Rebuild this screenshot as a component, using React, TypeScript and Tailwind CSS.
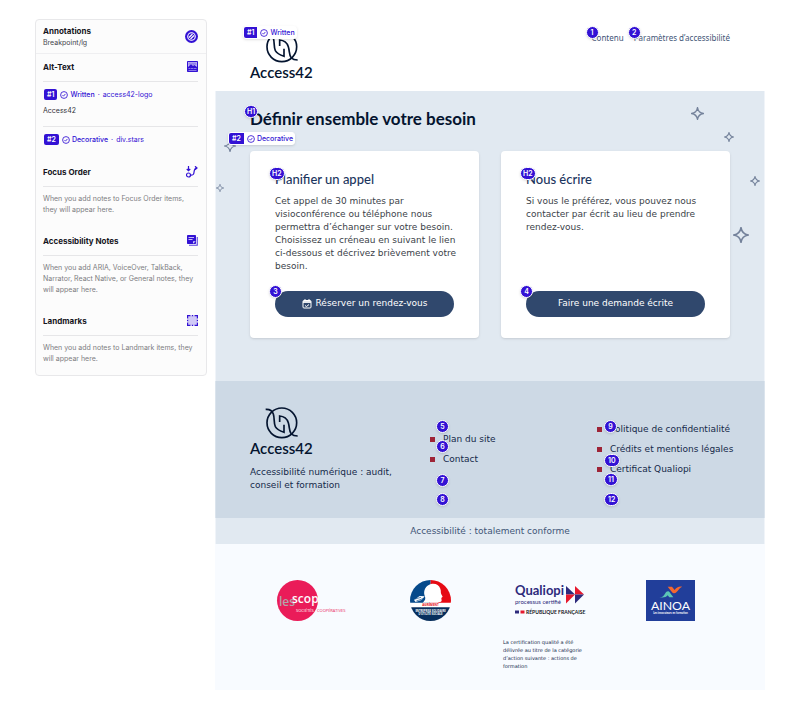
import React from "react";

const VERDANA = "font-[Verdana,'DejaVu_Sans',sans-serif]";
const LATO = "font-[Lato,sans-serif]";
const INTER = "font-[Inter,sans-serif]";

function CheckCircle() {
  return (
    <svg viewBox="0 0 16 16" className="size-2 shrink-0" fill="none" stroke="currentColor" strokeWidth="1.7" aria-hidden="true">
      <circle cx="8" cy="8" r="6.8" />
      <path d="M5 8.3l2 2 3.8-4.4" />
    </svg>
  );
}

function Badge({ children, className }: { children: React.ReactNode; className: string }) {
  return (
    <span
      className={`absolute z-10 flex h-[13px] min-w-[13px] items-center justify-center rounded-full border border-white bg-[#3312d4] text-[7px] leading-none font-semibold text-white shadow-sm ${INTER} ${className}`}
    >
      {children}
    </span>
  );
}

function Tag({ id, label, className }: { id: string; label: string; className: string }) {
  return (
    <span className={`absolute z-10 flex h-[13px] items-center gap-0.5 rounded-[3px] border border-white bg-white pr-px text-[7px] leading-none font-medium whitespace-nowrap text-[#3312d4] shadow-sm ${INTER} ${className}`}>
      <span className="mr-px flex h-full items-center rounded-l-[2px] bg-[#3312d4] px-[3px] font-semibold text-white">{id}</span>
      <CheckCircle />
      {label}
    </span>
  );
}

function Logo() {
  return (
    <div className="w-16 text-[#04142f]">
      <svg viewBox="150 110 102 99" className="ml-[15px] h-[33px] w-[34px]" fill="none" stroke="currentColor" strokeWidth="5" aria-hidden="true">
        <circle cx="200.500" cy="157.500" r="44.500" />
        <path d="M152 117c13-1 20 5 23 14 4 12 1 28 6 38 5 9 14 13 26 17v-23" />
        <path d="M194 155v-18c14 1 22 8 26 20 4 13 2 26 9 34 5 5 11 6 19 6" />
      </svg>
      <p className={`text-[15px] leading-4 font-semibold ${LATO}`}>Access42</p>
    </div>
  );
}

function Star({ className }: { className: string }) {
  return (
    <svg viewBox="0 0 24 24" className={`absolute text-[#74829b] ${className}`} fill="none" stroke="currentColor" strokeWidth="2.500" strokeLinejoin="round" aria-hidden="true">
      <path d="M12 1c1 6.500 4 10 11 11-7 1-10 4.500-11 11-1-6.500-4-10-11-11 7-1 10-4.500 11-11z" />
    </svg>
  );
}

function PanelTitle({ title, icon }: { title: string; icon: React.ReactNode }) {
  return (
    <div className="flex h-7 items-center justify-between border-b border-[#e6e6e8] pb-0.5 text-[#3312d4]">
      <h3 className="text-[8px] font-bold text-[#16161d]">{title}</h3>
      {icon}
    </div>
  );
}

function Note({ id, label, target }: { id: string; label: string; target: string }) {
  return (
    <p className="flex h-[11px] items-center gap-0.5 pl-px text-[7px] leading-none text-[#3312d4]">
      <span className="mr-px flex h-full items-center rounded-[2px] bg-[#3312d4] px-[3px] font-semibold text-white">{id}</span>
      <CheckCircle />
      <span className="font-medium">{label}</span>
      <span className="px-px">·</span>
      <span>{target}</span>
    </p>
  );
}

function Panel() {
  return (
    <aside className={`w-[172px] shrink-0 self-start rounded-[4px] border border-[#e8e8ea] bg-[#fcfcfc] pb-[11px] ${INTER}`}>
      <header className="flex h-[34px] items-center justify-between border-b border-[#efeff1] pr-2 pl-[7px]">
        <div>
          <h2 className="text-[8px] leading-[11px] font-bold text-[#16161d]">Annotations</h2>
          <p className="text-[7px] leading-[11px] text-[#44444c]">Breakpoint/lg</p>
        </div>
        <svg viewBox="0 0 26 26" className="size-[13px]" aria-hidden="true">
          <circle cx="13" cy="13" r="13" fill="#3312d4" />
          <g fill="none" stroke="#fff" strokeWidth="2.200">
            <circle cx="13" cy="13" r="7.500" />
            <path d="M8 15l7-7M11 18l7-7" />
          </g>
        </svg>
      </header>
      <div className="pr-2 pl-[7px]">
        <section className="pb-[14px]">
          <PanelTitle
            title="Alt-Text"
            icon={
              <svg viewBox="0 0 22 22" className="size-[11px]" aria-hidden="true">
                <rect width="22" height="22" rx="1.500" fill="#3312d4" />
                <path d="M2 2h18v10l-5-4-3 2-4-4-6 6z" fill="#c9c1f5" />
                <path d="M3 3h16v6l-3-2-3 2-5-4-5 4z" fill="#3312d4" opacity=".35" />
                <path d="M3 15h4m1 0h4m1 0h6M3 19h16" stroke="#a99cf0" strokeWidth="1.500" />
              </svg>
            }
          />
          <div className="border-b border-[#e6e6e8] pt-[7px] pb-[9px]">
            <Note id="#1" label="Written" target="access42-logo" />
            <p className="mt-[5px] text-[7px] leading-3 text-[#33333b]">Access42</p>
          </div>
          <div className="pt-[7px]">
            <Note id="#2" label="Decorative" target="div.stars" />
          </div>
        </section>
        <section className="pb-[13px]">
          <PanelTitle
            title="Focus Order"
            icon={
              <svg viewBox="0 0 24 24" className="size-3" fill="none" stroke="currentColor" strokeWidth="2.400" aria-hidden="true">
                <path d="M5 0v9M1.500 6L5 9.500 8.500 6" />
                <circle cx="5" cy="18" r="4" />
                <path d="M9 18c12 2 3-13 12-14M18 .5L22 4l-4 3.500" />
              </svg>
            }
          />
          <p className="pt-1.5 text-[7px] leading-[11px] text-[#7c7c82]">When you add notes to Focus Order items, they will appear here.</p>
        </section>
        <section className="pb-[13px]">
          <PanelTitle
            title="Accessibility Notes"
            icon={
              <svg viewBox="0 0 22 22" className="size-[11px]" aria-hidden="true">
                <rect width="18" height="18" rx="1.500" fill="#3312d4" />
                <path d="M20.500 4v16.500H4" fill="none" stroke="#5a40de" strokeWidth="2.200" />
                <path d="M3 5h11M3 9h8" stroke="#d5cff8" strokeWidth="1.800" />
                <path d="M12 17.500v-5h5.500z" fill="#d5cff8" />
              </svg>
            }
          />
          <p className="pt-1.5 text-[7px] leading-[11px] text-[#7c7c82]">When you add ARIA, VoiceOver, TalkBack, Narrator, React Native, or General notes, they will appear here.</p>
        </section>
        <section>
          <PanelTitle
            title="Landmarks"
            icon={
              <svg viewBox="0 0 22 22" className="size-[11px]" aria-hidden="true">
                <rect x="2" y="2" width="18" height="18" fill="#d0c9f6" />
                <path d="M1.200 7V1.200H7M9.500 1.200h3M15 1.200h5.800V7M20.800 9.500v3M20.800 15v5.800H15M12.500 20.800h-3M7 20.800H1.200V15M1.200 12.500v-3" fill="none" stroke="#3312d4" strokeWidth="2.400" />
              </svg>
            }
          />
          <p className="pt-1.5 text-[7px] leading-[11px] text-[#7c7c82]">When you add notes to Landmark items, they will appear here.</p>
        </section>
      </div>
    </aside>
  );
}

function Card({ title, text, action, icon, badge }: { title: string; text: string; action: string; icon?: React.ReactNode; badge: string }) {
  return (
    <article className="flex flex-col rounded-[4px] bg-white px-[25px] pt-5 pb-[21px] shadow-sm">
      <div className="relative">
        <Badge className="-top-1 -left-1.5 px-0.5">H2</Badge>
        <h2 className={`text-[13px] leading-4 font-medium text-[#1c355e] ${LATO}`}>{title}</h2>
      </div>
      <p className="-mr-2 mt-2 mb-[18px] text-[9px] leading-[13px] text-[#3b3f49]">{text}</p>
      <div className="relative mt-auto">
        <Badge className="-top-1.5 -left-1.5">{badge}</Badge>
        <button type="button" className="flex h-[26px] w-full items-center justify-center gap-1 rounded-full bg-[#30486d] text-[9px] text-white">
          {icon}
          {action}
        </button>
      </div>
    </article>
  );
}

function FooterList({ items }: { items: string[] }) {
  return (
    <ul>
      {items.map((item) => (
        <li key={item} className="flex h-5 items-center gap-2">
          <span className="size-[5px] shrink-0 bg-[#9e2437]" />
          <a href="#" className="whitespace-nowrap">{item}</a>
        </li>
      ))}
    </ul>
  );
}

export default function App() {
  return (
    <div className={`flex min-h-screen gap-2 bg-white pt-[19px] pr-[35px] pb-5 pl-[35px] ${VERDANA}`}>
      <Panel />
      <div className="min-w-0 flex-1">
        <header className="flex items-start justify-between px-[35px] pt-3">
          <div className="relative pb-[11px]">
            <Tag id="#1" label="Written" className="-top-[5px] -left-[7px]" />
            <Logo />
          </div>
          <nav className="flex gap-2.5 font-['Noto_Sans',sans-serif] text-[8px] leading-[14px] text-[#3f5577]">
            <span className="relative">
              <Badge className="-top-[5px] -left-1.5">1</Badge>
              <a href="#">Contenu</a>
            </span>
            <span className="relative">
              <Badge className="-top-[5px] -left-1.5">2</Badge>
              <a href="#">Paramètres d’accessibilité</a>
            </span>
          </nav>
        </header>

        <main className="relative border-x border-[#f0f4f9] bg-[#e1e9f1] px-[34px] pt-4 pb-[43px]">
          <Star className="top-[49px] left-2 size-3" />
          <Star className="top-[93px] left-0 size-2" />
          <Star className="top-4 right-[60px] size-[13px]" />
          <Star className="top-[41px] right-[30px] size-2.5" />
          <Star className="top-[85px] right-1 size-2.5" />
          <Star className="top-[136px] right-[15px] size-4" />
          <Tag id="#2" label="Decorative" className="top-[41px] left-3" />
          <div className="relative mb-5">
            <Badge className="-top-0.5 -left-1.5 px-0.5">H1</Badge>
            <h1 className={`text-[17px] leading-6 font-bold text-[#04142f] ${LATO}`}>Définir ensemble votre besoin</h1>
          </div>
          <div className="grid grid-cols-2 gap-[22px]">
            <Card
              title="Planifier un appel"
              text="Cet appel de 30 minutes par visioconférence ou téléphone nous permettra d’échanger sur votre besoin. Choisissez un créneau en suivant le lien ci-dessous et décrivez brièvement votre besoin."
              action="Réserver un rendez-vous"
              badge="3"
              icon={
                <svg viewBox="0 0 20 20" className="size-2.5" fill="none" stroke="currentColor" strokeWidth="2" aria-hidden="true">
                  <rect x="2" y="3" width="16" height="15" rx="2" />
                  <path d="M2 6h16" strokeWidth="3.500" />
                  <path d="M6 0v4M14 0v4M6 13l3 2 5-4" />
                </svg>
              }
            />
            <Card
              title="Nous écrire"
              text="Si vous le préférez, vous pouvez nous contacter par écrit au lieu de prendre rendez-vous."
              action="Faire une demande écrite"
              badge="4"
            />
          </div>
        </main>

        <footer>
          <div className="grid grid-cols-[minmax(0,180fr)_minmax(0,167fr)_minmax(0,133fr)] items-center border-x border-[#dbe4ed] bg-[#cdd9e5] px-[34px] py-[26px] text-[9px] leading-[13px] text-[#15294a]">
            <div>
              <Logo />
              <p className="mt-2.5 w-[145px]">Accessibilité numérique : audit, conseil et formation</p>
            </div>
            <div className="relative">
              <Badge className="-top-2.5 left-1.5">5</Badge>
              <Badge className="top-2.5 left-1.5">6</Badge>
              <Badge className="top-11 left-1.5">7</Badge>
              <Badge className="top-[63px] left-1.5">8</Badge>
              <FooterList items={["Plan du site", "Contact"]} />
            </div>
            <div className="relative">
              <Badge className="top-0 left-[7px]">9</Badge>
              <Badge className="top-[34px] left-[7px] px-[3px]">10</Badge>
              <Badge className="top-[53px] left-[7px] px-[3px]">11</Badge>
              <Badge className="top-[73px] left-[7px] px-[3px]">12</Badge>
              <FooterList items={["Politique de confidentialité", "Crédits et mentions légales", "Certificat Qualiopi"]} />
            </div>
          </div>
          <p className="border-x border-[#f0f4f9] bg-[#e1e9f1] text-center text-[9px] leading-[26px] text-[#3f5577]">Accessibilité : totalement conforme</p>
          <div className="grid grid-cols-4 items-start justify-items-center bg-[#f8fbff] px-[35px] pt-9 pb-5">
            <svg viewBox="0 0 68 41" className="h-[41px] w-[68px] overflow-visible" role="img" aria-label="Les Scop" fontFamily="'Open Sans', sans-serif">
              <circle cx="21.500" cy="20.500" r="20.500" fill="#ea1c59" />
              <text x="3" y="26" fontSize="12" fontWeight="600" fill="#b3a3aa">les</text>
              <text x="16" y="23" fontSize="12" fontWeight="600" fill="#fff">scop</text>
              <text x="20" y="32" fontSize="4" fill="#fff">SOCIÉTÉS</text>
              <text x="41" y="32" fontSize="4" fill="#ea1c59">COOPÉRATIVES</text>
            </svg>
            <svg viewBox="0 0 123 123" className="size-[41px]" role="img" aria-label="Entreprise solidaire d’utilité sociale" fontFamily="'Open Sans', sans-serif">
              <clipPath id="seal"><circle cx="61.500" cy="61.500" r="61.500" /></clipPath>
              <g clipPath="url(#seal)">
                <rect width="123" height="123" fill="#fff" />
                <path d="M0 0h62v68H0z" fill="#064a8b" />
                <path d="M62 0h61v68H62z" fill="#e60a14" />
                <path d="M38 68c9-8 9-14 6-21-5-14 3-31 19-35 13-3 24 3 28 14 3 8 0 11 3 17l4 7-4 4 1 8c-2 5-8 3-12 6zM12 60l17-12 15 1-9 11-18 6z" fill="#fff" />
                <path d="M15 57l18-5M19 63l20-7" stroke="#064a8b" strokeWidth="2" />
                <path d="M0 82h123v41H0z" fill="#082f5d" />
              </g>
              <text x="61.500" y="79" fontSize="9" fontWeight="700" textAnchor="middle" fill="#e60a14">AGRÉMENT</text>
              <text x="61.500" y="95" fontSize="8" fontWeight="700" textAnchor="middle" fill="#fff">ENTREPRISE SOLIDAIRE</text>
              <text x="61.500" y="106" fontSize="8" fontWeight="700" textAnchor="middle" fill="#fff">D’UTILITÉ SOCIALE</text>
            </svg>
            <div className="flex w-[94px] flex-col items-center">
              <svg viewBox="0 0 70 41" className="h-[41px] w-[70px] overflow-visible" role="img" aria-label="Qualiopi processus certifié" fontFamily="Lato, sans-serif">
                <text x="0" y="15" fontSize="13" fontWeight="700" fill="#2d2a7c">Qualiopi</text>
                <text x="0" y="24" fontSize="6" fill="#2d2a7c">processus certifié</text>
                <path d="M51 6l9 8.500h-9z" fill="#2d2a7c" />
                <path d="M51 14.500h9L51 23.500z" fill="#e6192e" />
                <path d="M60 6l9 8.500h-9z" fill="#e6192e" />
                <path d="M60 14.500h9L60 23.500z" fill="#2d2a7c" />
                <path d="M0 30.500h4v3H0z" fill="#2d2a7c" />
                <path d="M5.500 30.500h4v3h-4z" fill="#e6192e" />
                <text x="11" y="34" fontSize="5" fontWeight="700" fill="#16161d">RÉPUBLIQUE FRANÇAISE</text>
              </svg>
              <p className="mt-[17px] w-[88px] self-start text-[5px] leading-2 text-[#15294a]">La certification qualité a été délivrée au titre de la catégorie d’action suivante : actions de formation</p>
            </div>
            <svg viewBox="0 0 147 123" className="h-[41px] w-[49px]" role="img" aria-label="AINOA, les innovateurs en formation" fontFamily="Lato, sans-serif">
              <rect width="147" height="123" fill="#213e9a" />
              <path d="M40 52c9 0 13-4 17-11 6-9 11-9 16-1l9 12H70l-5-6c-5 6-12 8-25 6z" fill="#5cc5b5" />
              <path d="M65 20h13l8 10c5-7 11-11 22-10-7 4-9 8-14 14-6 8-12 7-17 1z" fill="#f4672f" />
              <text x="73.500" y="90" fontSize="37" textAnchor="middle" fill="#fff">AINOA</text>
              <text x="73.500" y="103" fontSize="8" fontWeight="700" textAnchor="middle" fill="#fff">Les innovateurs en formation</text>
            </svg>
          </div>
        </footer>
      </div>
    </div>
  );
}
